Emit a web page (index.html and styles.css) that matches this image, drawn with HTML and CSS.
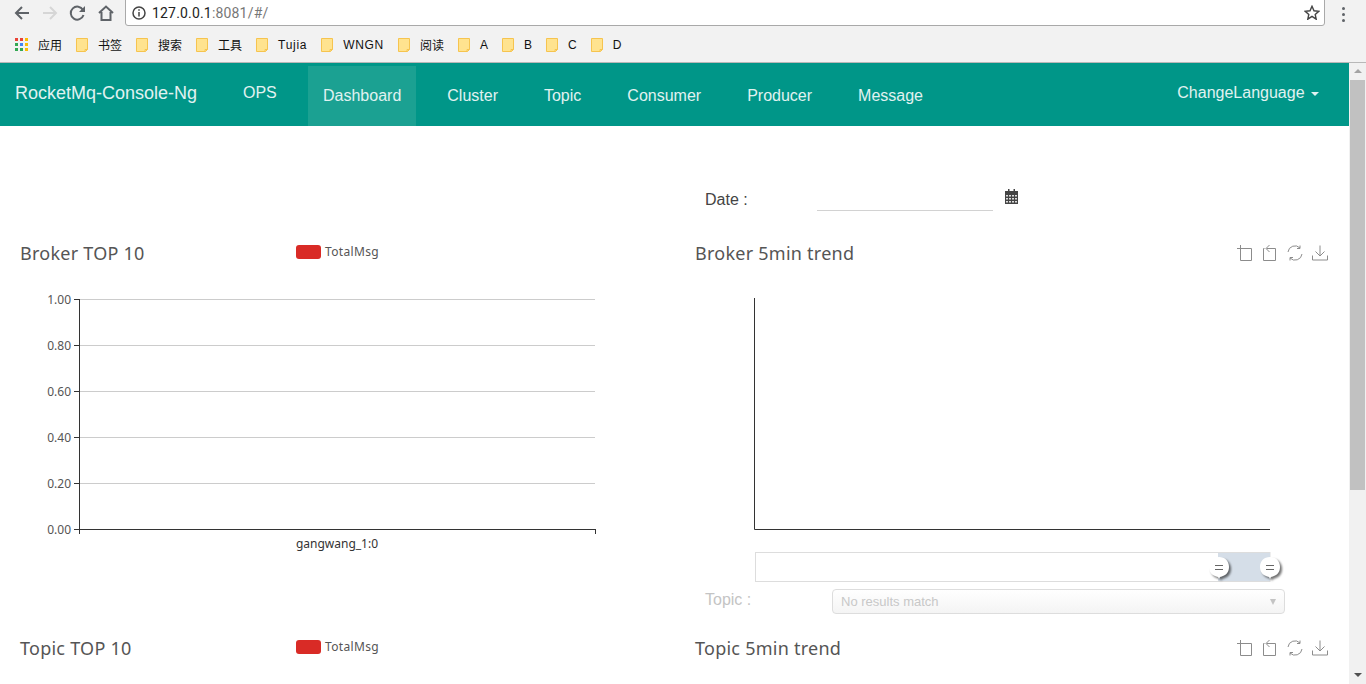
FILE: index.html
```html
<!DOCTYPE html>
<html>
<head>
	<title>RocketMq-Console-Ng</title>
	<link rel="stylesheet" href="styles.css">
</head>
<body>
	<svg class="defs" width="0" height="0">
		<symbol id="folder" viewBox="0 0 12 14">
			<path d="M.5.5h11v11l-2 2H.5z" fill="#ffe38f" stroke="#f6c44f"/>
			<path d="M9 13.5v-2h2.500" fill="none" stroke="#f6c44f"/>
		</symbol>
		<symbol id="tool-zoom" viewBox="0 0 16 16">
			<path d="M0 3.500h14.500M3.500 0v15.500h11V3.500" fill="none" stroke="#8c8c8c"/>
		</symbol>
		<symbol id="tool-back" viewBox="0 0 16 16">
			<path d="M2.500 3.500h-1v12h12v-12H4.500M7.500 0L4 3.500 7.500 7" fill="none" stroke="#8c8c8c"/>
		</symbol>
		<symbol id="tool-restore" viewBox="0 0 16 16">
			<path d="M1 7a7 7 0 0 1 12-4M15 9a7 7 0 0 1-12 4M13 .5V3.500H10M3 15.500V12.500H6" fill="none" stroke="#8c8c8c"/>
		</symbol>
		<symbol id="tool-save" viewBox="0 0 16 16">
			<path d="M8 .5V11M3.500 6.500L8 11l4.500-4.500M.5 10.500v4.500h15v-4.500" fill="none" stroke="#8c8c8c"/>
		</symbol>
	</svg>

	<div class="browser">
		<div class="toolbar">
			<svg class="tool-icons" width="125" height="26" viewBox="0 0 125 26">
				<path d="M29 13H16M22 7l-6 6 6 6" fill="none" stroke="#5f6368" stroke-width="2"/>
				<path d="M43 13h13M50 7l6 6-6 6" fill="none" stroke="#d6d6d6" stroke-width="2"/>
				<path d="M83 10a6.500 6.500 0 1 0 .5 5" fill="none" stroke="#5f6368" stroke-width="2"/>
				<path d="M85 6v6h-6z" fill="#5f6368"/>
				<path d="M99 13l7-6.500 7 6.500M101.500 12v8h9v-8" fill="none" stroke="#5f6368" stroke-width="2"/>
			</svg>
			<div class="omnibox">
				<svg width="14" height="14" viewBox="0 0 14 14">
					<circle cx="7" cy="7" r="6" fill="none" stroke="#444" stroke-width="1.500"/>
					<path d="M7 6v4.500M7 3.200v1.600" stroke="#444" stroke-width="1.500"/>
				</svg>
				<span class="url">127.0.0.1<span class="url-rest">:8081/#/</span></span>
				<svg class="star" width="16" height="15" viewBox="0 0 16 15">
					<path d="M8 1.300l2 4.500 4.800.5-3.600 3.200 1 4.700L8 11.300l-4.200 2.900 1-4.700L1.200 6.300 6 5.800z" fill="none" stroke="#444" stroke-width="1.400"/>
				</svg>
			</div>
			<div class="menu-dots"><i></i><i></i><i></i></div>
		</div>

		<div class="bookmarks">
			<a class="bookmark">
				<svg width="13" height="13" viewBox="0 0 13 13">
					<path d="M0 0h3v3H0z" fill="#ea4335"/><path d="M5 0h3v3H5z" fill="#ea4335"/><path d="M10 0h3v3h-3z" fill="#fbbc05"/>
					<path d="M0 5h3v3H0z" fill="#34a853"/><path d="M5 5h3v3H5z" fill="#4285f4"/><path d="M10 5h3v3h-3z" fill="#fbbc05"/>
					<path d="M0 10h3v3H0z" fill="#34a853"/><path d="M5 10h3v3H5z" fill="#34a853"/><path d="M10 10h3v3h-3z" fill="#fbbc05"/>
				</svg>
				应用
			</a>
			<a class="bookmark"><svg class="folder"><use href="#folder"/></svg>书签</a>
			<a class="bookmark"><svg class="folder"><use href="#folder"/></svg>搜索</a>
			<a class="bookmark"><svg class="folder"><use href="#folder"/></svg>工具</a>
			<a class="bookmark wide"><svg class="folder"><use href="#folder"/></svg>Tujia</a>
			<a class="bookmark wide"><svg class="folder"><use href="#folder"/></svg>WNGN</a>
			<a class="bookmark"><svg class="folder"><use href="#folder"/></svg>阅读</a>
			<a class="bookmark"><svg class="folder"><use href="#folder"/></svg>A</a>
			<a class="bookmark"><svg class="folder"><use href="#folder"/></svg>B</a>
			<a class="bookmark"><svg class="folder"><use href="#folder"/></svg>C</a>
			<a class="bookmark"><svg class="folder"><use href="#folder"/></svg>D</a>
		</div>

		<div class="viewport">
			<div class="page">
				<nav class="navbar">
					<a class="brand">RocketMq-Console-Ng</a>
					<a class="nav-ops">OPS</a>
					<ul class="nav-links">
						<li class="active">Dashboard</li>
						<li>Cluster</li>
						<li>Topic</li>
						<li>Consumer</li>
						<li>Producer</li>
						<li>Message</li>
					</ul>
					<a class="lang">ChangeLanguage <span class="caret"></span></a>
				</nav>

				<div class="dashboard">
					<div class="date-row">
						<label class="field-label">Date :</label>
						<div class="date-input"></div>
						<svg class="calendar" width="13" height="15" viewBox="0 0 13 15">
							<path d="M0 2h13v13H0z" fill="#444"/>
							<path d="M3 0h1.500v3H3zM8.500 0H10v3H8.500z" fill="#444"/>
							<path d="M1 6h2v1.500H1zM4 6h2v1.500H4zM7 6h2v1.500H7zM10 6h2v1.500h-2zM1 9h2v1.500H1zM4 9h2v1.500H4zM7 9h2v1.500H7zM10 9h2v1.500h-2zM1 12h2v1.500H1zM4 12h2v1.500H4zM7 12h2v1.500H7zM10 12h2v1.500h-2z" fill="#ddd"/>
						</svg>
					</div>

					<section class="panel panel-left">
						<div class="panel-head">
							<h3 class="panel-title">Broker TOP 10</h3>
							<span class="legend"><i></i>TotalMsg</span>
						</div>
						<svg class="chart" width="683" height="342" viewBox="0 280 683 342">
							<g class="grid">
								<path d="M79 299.500h516M79 345.500h516M79 391.500h516M79 437.500h516M79 483.500h516"/>
							</g>
							<g class="axis">
								<path d="M79.500 299v235M74 529.500h521.500M595.500 529v5M74 299.500h5M74 345.500h5M74 391.500h5M74 437.500h5M74 483.500h5"/>
							</g>
							<g class="ticks">
								<text x="71" y="304">1.00</text>
								<text x="71" y="350">0.80</text>
								<text x="71" y="396">0.60</text>
								<text x="71" y="442">0.40</text>
								<text x="71" y="488">0.20</text>
								<text x="71" y="534">0.00</text>
							</g>
							<text class="x-label" x="337" y="548">gangwang_1:0</text>
						</svg>
					</section>

					<section class="panel panel-right">
						<div class="panel-head">
							<h3 class="panel-title">Broker 5min trend</h3>
							<div class="toolbox">
								<svg><use href="#tool-zoom"/></svg>
								<svg><use href="#tool-back"/></svg>
								<svg><use href="#tool-restore"/></svg>
								<svg><use href="#tool-save"/></svg>
							</div>
						</div>
						<svg class="chart" width="666" height="309" viewBox="683 280 666 309">
							<path class="axis" d="M754.500 298v231.500H1270"/>
							<rect class="slider-box" x="755.500" y="552.500" width="514.500" height="29"/>
							<rect class="slider-fill" x="1218" y="553" width="52" height="28"/>
							<g class="slider-handle">
								<path d="M1219 557c6 0 10 4 10 10s-4 9-9 10l-1 2-1-2c-5-1-9-4-9-10s4-10 10-10z"/>
								<path d="M1270 557c6 0 10 4 10 10s-4 9-9 10l-1 2-1-2c-5-1-9-4-9-10s4-10 10-10z"/>
							</g>
							<path class="slider-grip" d="M1215 565.500h8M1215 569.500h8M1266 565.500h8M1266 569.500h8"/>
						</svg>
						<div class="topic-row">
							<label class="field-label muted">Topic :</label>
							<div class="select-box">No results match<span class="select-arrow"></span></div>
						</div>
					</section>

					<section class="panel panel-left">
						<div class="panel-head">
							<h3 class="panel-title">Topic TOP 10</h3>
							<span class="legend"><i></i>TotalMsg</span>
						</div>
					</section>

					<section class="panel panel-right">
						<div class="panel-head">
							<h3 class="panel-title">Topic 5min trend</h3>
							<div class="toolbox">
								<svg><use href="#tool-zoom"/></svg>
								<svg><use href="#tool-back"/></svg>
								<svg><use href="#tool-restore"/></svg>
								<svg><use href="#tool-save"/></svg>
							</div>
						</div>
					</section>
				</div>
			</div>

			<div class="scrollbar">
				<span class="scroll-arrow up"></span>
				<div class="scroll-thumb"></div>
				<div class="scroll-track"></div>
				<span class="scroll-arrow down"></span>
			</div>
		</div>
	</div>
</body>
</html>
```

FILE: styles.css
```css
* {
	box-sizing: border-box;
}

html, body {
	margin: 0;
	padding: 0;
	height: 100%;
	overflow: hidden;
	background-color: #fff;
	font-family: "Liberation Sans", Arial, sans-serif;
}

.defs {
	position: absolute;
}

.browser {
	display: flex;
	flex-direction: column;
	height: 684px;
}

/* browser chrome */
.toolbar {
	display: flex;
	align-items: flex-start;
	height: 31px;
	background-color: #f2f2f2;
}

.tool-icons {
	flex: none;
}

.omnibox {
	display: flex;
	align-items: center;
	width: 1200px;
	height: 27px;
	margin-top: -1px;
	padding: 0 4px 0 6px;
	background-color: #fff;
	border: 1px solid #a9a9a9;
	border-radius: 0 0 3px 3px;
}

.url {
	flex: 1;
	margin-left: 6px;
	font-family: Roboto, sans-serif;
	font-size: 14px;
	letter-spacing: 0.18px;
	color: #222;
}

.url-rest {
	color: #777;
}

.menu-dots {
	display: flex;
	flex-direction: column;
	gap: 3px;
	margin: 7px 0 0 17px;
}

.menu-dots i {
	width: 3px;
	height: 3px;
	border-radius: 50%;
	background-color: #5f6368;
}

.bookmarks {
	display: flex;
	align-items: center;
	gap: 14px;
	height: 32px;
	padding: 0 0 4px 15px;
	background-color: #f2f2f2;
	border-bottom: 1px solid #b8b8b8;
	font-family: "Liberation Sans", "Noto Sans CJK SC", sans-serif;
	font-size: 12px;
	color: #111;
}

.bookmark {
	display: flex;
	align-items: center;
	gap: 10px;
}

.bookmark.wide {
	letter-spacing: 0.7px;
}

.folder {
	width: 12px;
	height: 14px;
}

.viewport {
	display: flex;
	flex: 1;
	min-height: 0;
}

.page {
	flex: 1;
	min-width: 0;
	overflow: hidden;
}

/* navbar */
.navbar {
	display: flex;
	height: 63px;
	padding-top: 3px;
	background-color: #009688;
	color: #e0f2f1;
	font-size: 16px;
}

.brand {
	width: 243px;
	padding: 17px 0 0 15px;
	font-size: 18px;
	line-height: 20px;
}

.nav-ops {
	width: 65px;
	padding-top: 17px;
	line-height: 20px;
}

.nav-links {
	display: flex;
	flex: 1;
	margin: 0;
	padding: 0;
	list-style: none;
}

.nav-links li {
	padding: 20px 15px 0;
	margin-right: 16px;
	line-height: 20px;
}

.nav-links li.active {
	background-color: #1ba192;
}

.lang {
	padding: 17px 30px 0 0;
	line-height: 20px;
}

.caret {
	display: inline-block;
	margin-left: 2px;
	vertical-align: middle;
	border-top: 4px solid #e0f2f1;
	border-left: 4px solid transparent;
	border-right: 4px solid transparent;
}

/* dashboard grid */
.dashboard {
	display: grid;
	grid-template-columns: 683px 666px;
	grid-template-rows: 112px 395px 51px;
}

.date-row {
	grid-column: 2;
	display: flex;
	align-items: flex-start;
	padding: 63px 0 0 22px;
}

.field-label {
	width: 112px;
	padding-top: 1px;
	font-size: 16px;
	line-height: 20px;
	color: #444;
}

.field-label.muted {
	width: 127px;
	color: #c4c4c4;
}

.date-input {
	width: 176px;
	height: 22px;
	border-bottom: 1px solid #d2d2d2;
}

.calendar {
	margin-left: 12px;
}

.panel-head {
	display: flex;
	align-items: flex-start;
	height: 42px;
	padding-top: 3px;
}

.panel-left .panel-head {
	padding-left: 20px;
}

.panel-right .panel-head {
	padding: 3px 21px 0 12px;
	justify-content: space-between;
}

.panel-title {
	margin: 0;
	font-family: "Noto Sans", sans-serif;
	font-size: 18px;
	line-height: 24px;
	font-weight: 400;
	letter-spacing: 0.25px;
	color: #555;
}

.panel-left .panel-title {
	width: 276px;
}

.legend {
	display: flex;
	align-items: center;
	gap: 4px;
	margin-top: 4px;
	font-family: "Noto Sans", sans-serif;
	font-size: 12px;
	line-height: 14px;
	letter-spacing: 0.35px;
	color: #555;
}

.legend i {
	width: 25px;
	height: 14px;
	border-radius: 3px;
	background-color: #d92b26;
}

.toolbox {
	display: flex;
	gap: 9px;
	margin-top: 4px;
}

.toolbox svg {
	width: 16px;
	height: 16px;
}

/* charts */
.chart {
	display: block;
	font-family: "Noto Sans", sans-serif;
	font-size: 12px;
}

.grid path {
	fill: none;
	stroke: #ccc;
}

.axis path, path.axis {
	fill: none;
	stroke: #333;
}

.ticks text {
	fill: #555;
	text-anchor: end;
}

.x-label {
	fill: #333;
	text-anchor: middle;
}

.slider-box {
	fill: #fff;
	stroke: #ddd;
}

.slider-fill {
	fill: #d5dee8;
}

.slider-handle path {
	fill: #fff;
	filter: drop-shadow(2px 2px 1px rgba(0, 0, 0, 0.55));
}

.slider-grip {
	fill: none;
	stroke: #666;
}

.topic-row {
	display: flex;
	align-items: flex-start;
	padding-left: 22px;
}

.select-box {
	display: flex;
	align-items: center;
	justify-content: space-between;
	width: 453px;
	height: 25px;
	padding: 0 8px;
	border: 1px solid #ddd;
	border-radius: 4px;
	background: linear-gradient(#fff, #f4f4f4);
	font-size: 13px;
	color: #c8c8c8;
}

.select-arrow {
	border-top: 6px solid #c4c4c4;
	border-left: 3px solid transparent;
	border-right: 3px solid transparent;
}

/* page scrollbar */
.scrollbar {
	display: flex;
	flex-direction: column;
	align-items: center;
	flex: none;
	width: 17px;
	background-color: #f1f1f1;
}

.scroll-arrow {
	flex: none;
	height: 0;
	margin-top: 6px;
	border-left: 4px solid transparent;
	border-right: 4px solid transparent;
	border-bottom: 4px solid #a3a3a3;
}

.scroll-arrow.down {
	margin: 4px 0 7px;
	border-bottom: 0;
	border-top: 4px solid #505050;
}

.scroll-thumb {
	flex: none;
	width: 15px;
	height: 410px;
	margin-top: 7px;
	background-color: #c1c1c1;
}

.scroll-track {
	flex: 1;
}
```
